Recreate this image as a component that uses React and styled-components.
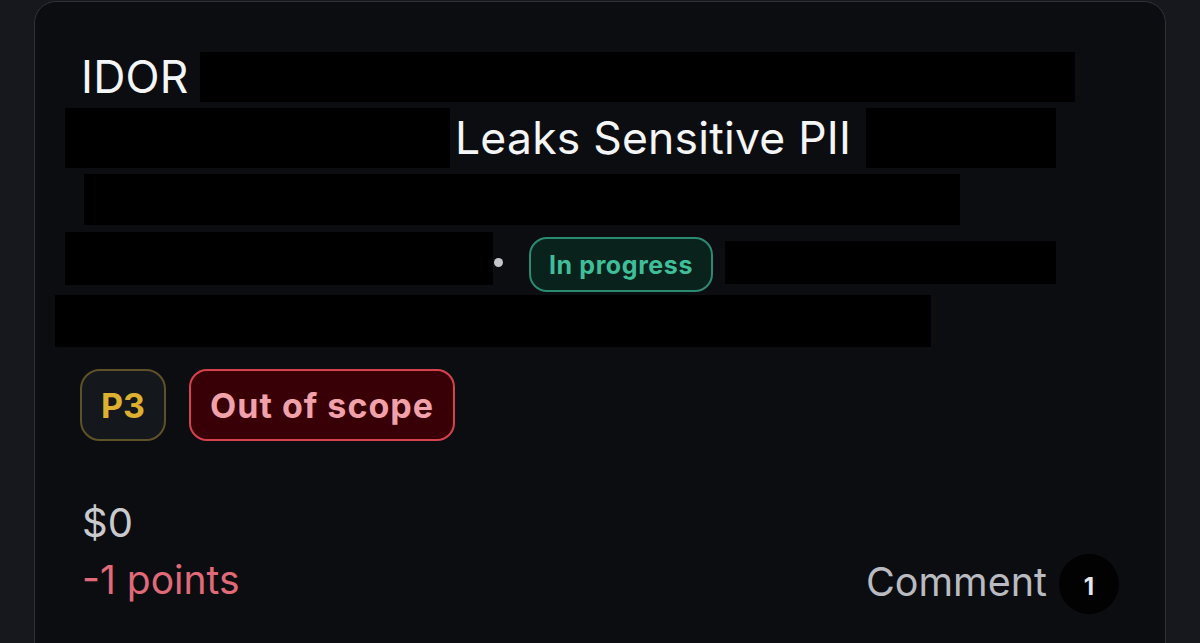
import React from "react";
import styled, { createGlobalStyle } from "styled-components";

const GlobalStyle = createGlobalStyle`
    html, body {
        margin: 0;
        padding: 0;
        background: #16181d;
        overflow: hidden;
    }
    body {
        font-family: Inter, "Noto Sans", sans-serif;
    }
`;

const Page = styled.div`
    width: 1200px;
    height: 643px;
    padding: 1px 34px 0;
    box-sizing: border-box;
`;

const Card = styled.div`
    height: 700px;
    box-sizing: border-box;
    background: #0c0d11;
    border: 1.5px solid #303238;
    border-radius: 22px;
    padding-top: 50px;
    display: flex;
    flex-direction: column;
`;

const Line = styled.div`
    display: flex;
    align-items: center;
    gap: ${(p) => p.gap || 0}px;
    height: ${(p) => p.h}px;
    margin-top: ${(p) => p.top || 0}px;
    padding-left: ${(p) => p.left}px;
`;

const Redact = styled.span`
    display: inline-block;
    flex: none;
    background: #000;
    width: ${(p) => p.w}px;
    height: ${(p) => p.h}px;
    margin-left: ${(p) => p.ml || 0}px;
    align-self: ${(p) => p.align || "center"};
`;

const TitleText = styled.span`
    font-size: 44.5px;
    font-weight: 400;
    color: #f4f5f7;
    white-space: nowrap;
    letter-spacing: 0.2px;
    margin-left: ${(p) => p.ml || 0}px;
`;

const Dot = styled.span`
    width: 9px;
    height: 9px;
    border-radius: 50%;
    background: #c4c6cc;
    margin: 0 26px 0 1px;
    flex: none;
`;

const Pill = styled.span`
    display: inline-flex;
    align-items: center;
    justify-content: center;
    box-sizing: border-box;
    height: ${(p) => p.h}px;
    width: ${(p) => p.w}px;
    margin-top: ${(p) => p.mt || 0}px;
    border-radius: ${(p) => p.r}px;
    border: 2px solid ${(p) => p.border};
    background: ${(p) => p.bg};
    color: ${(p) => p.color};
    font-size: ${(p) => p.size}px;
    font-weight: 700;
    letter-spacing: ${(p) => p.ls || 0}px;
    white-space: nowrap;
    flex: none;
`;

const Tags = styled.div`
    display: flex;
    gap: 23px;
    padding-left: 45px;
    margin-top: 22px;
`;

const Footer = styled.div`
    display: flex;
    justify-content: space-between;
    align-items: flex-end;
    padding: 0 46px 0 47px;
    margin-top: 52px;
`;

const Amounts = styled.div`
    display: flex;
    flex-direction: column;
`;

const Bounty = styled.span`
    font-size: 40px;
    color: #c8cace;
    line-height: 60px;
`;

const Points = styled.span`
    font-size: 39px;
    color: #e06a78;
    line-height: 54px;
`;

const CommentRow = styled.div`
    display: flex;
    align-items: center;
    gap: 12px;
    margin-bottom: -7px;
`;

const CommentLabel = styled.span`
    font-size: 39.5px;
    color: #b9bbc0;
    margin-bottom: 4px;
`;

const Count = styled.span`
    width: 60px;
    height: 60px;
    border-radius: 50%;
    background: #020203;
    color: #e6e7ea;
    font-size: 24px;
    font-weight: 700;
    display: flex;
    align-items: center;
    justify-content: center;
    padding-top: 4px;
    box-sizing: border-box;
`;

export default function App() {
    return (
        <>
            <GlobalStyle />
            <Page>
                <Card>
                    <Line h={50} left={46}>
                        <TitleText>IDOR</TitleText>
                        <Redact w={875} h={50} ml={11} />
                    </Line>
                    <Line h={60} left={30} top={6}>
                        <Redact w={385} h={60} />
                        <TitleText ml={5}>Leaks Sensitive PII</TitleText>
                        <Redact w={190} h={60} ml={15} />
                    </Line>
                    <Line h={51} left={49} top={6}>
                        <Redact w={876} h={51} />
                    </Line>
                    <Line h={61} left={30} top={7}>
                        <Redact w={428} h={53} align="flex-start" />
                        <Dot />
                        <Pill w={184} h={55} mt={4} r={18} border="#2b8a72" bg="#0a221c" color="#3fbf99" size={25} ls={0.6}>
                            In progress
                        </Pill>
                        <Redact w={331} h={43} ml={12} />
                    </Line>
                    <Line h={52} left={20} top={2}>
                        <Redact w={876} h={52} />
                    </Line>
                    <Tags>
                        <Pill w={86} h={72} r={20} border="#5f5127" bg="#14171c" color="#ddb12f" size={34}>
                            P3
                        </Pill>
                        <Pill w={266} h={72} r={18} border="#d6414e" bg="#380006" color="#f0a1a9" size={34} ls={1}>
                            Out of scope
                        </Pill>
                    </Tags>
                    <Footer>
                        <Amounts>
                            <Bounty>$0</Bounty>
                            <Points>-1 points</Points>
                        </Amounts>
                        <CommentRow>
                            <CommentLabel>Comment</CommentLabel>
                            <Count>1</Count>
                        </CommentRow>
                    </Footer>
                </Card>
            </Page>
        </>
    );
}
